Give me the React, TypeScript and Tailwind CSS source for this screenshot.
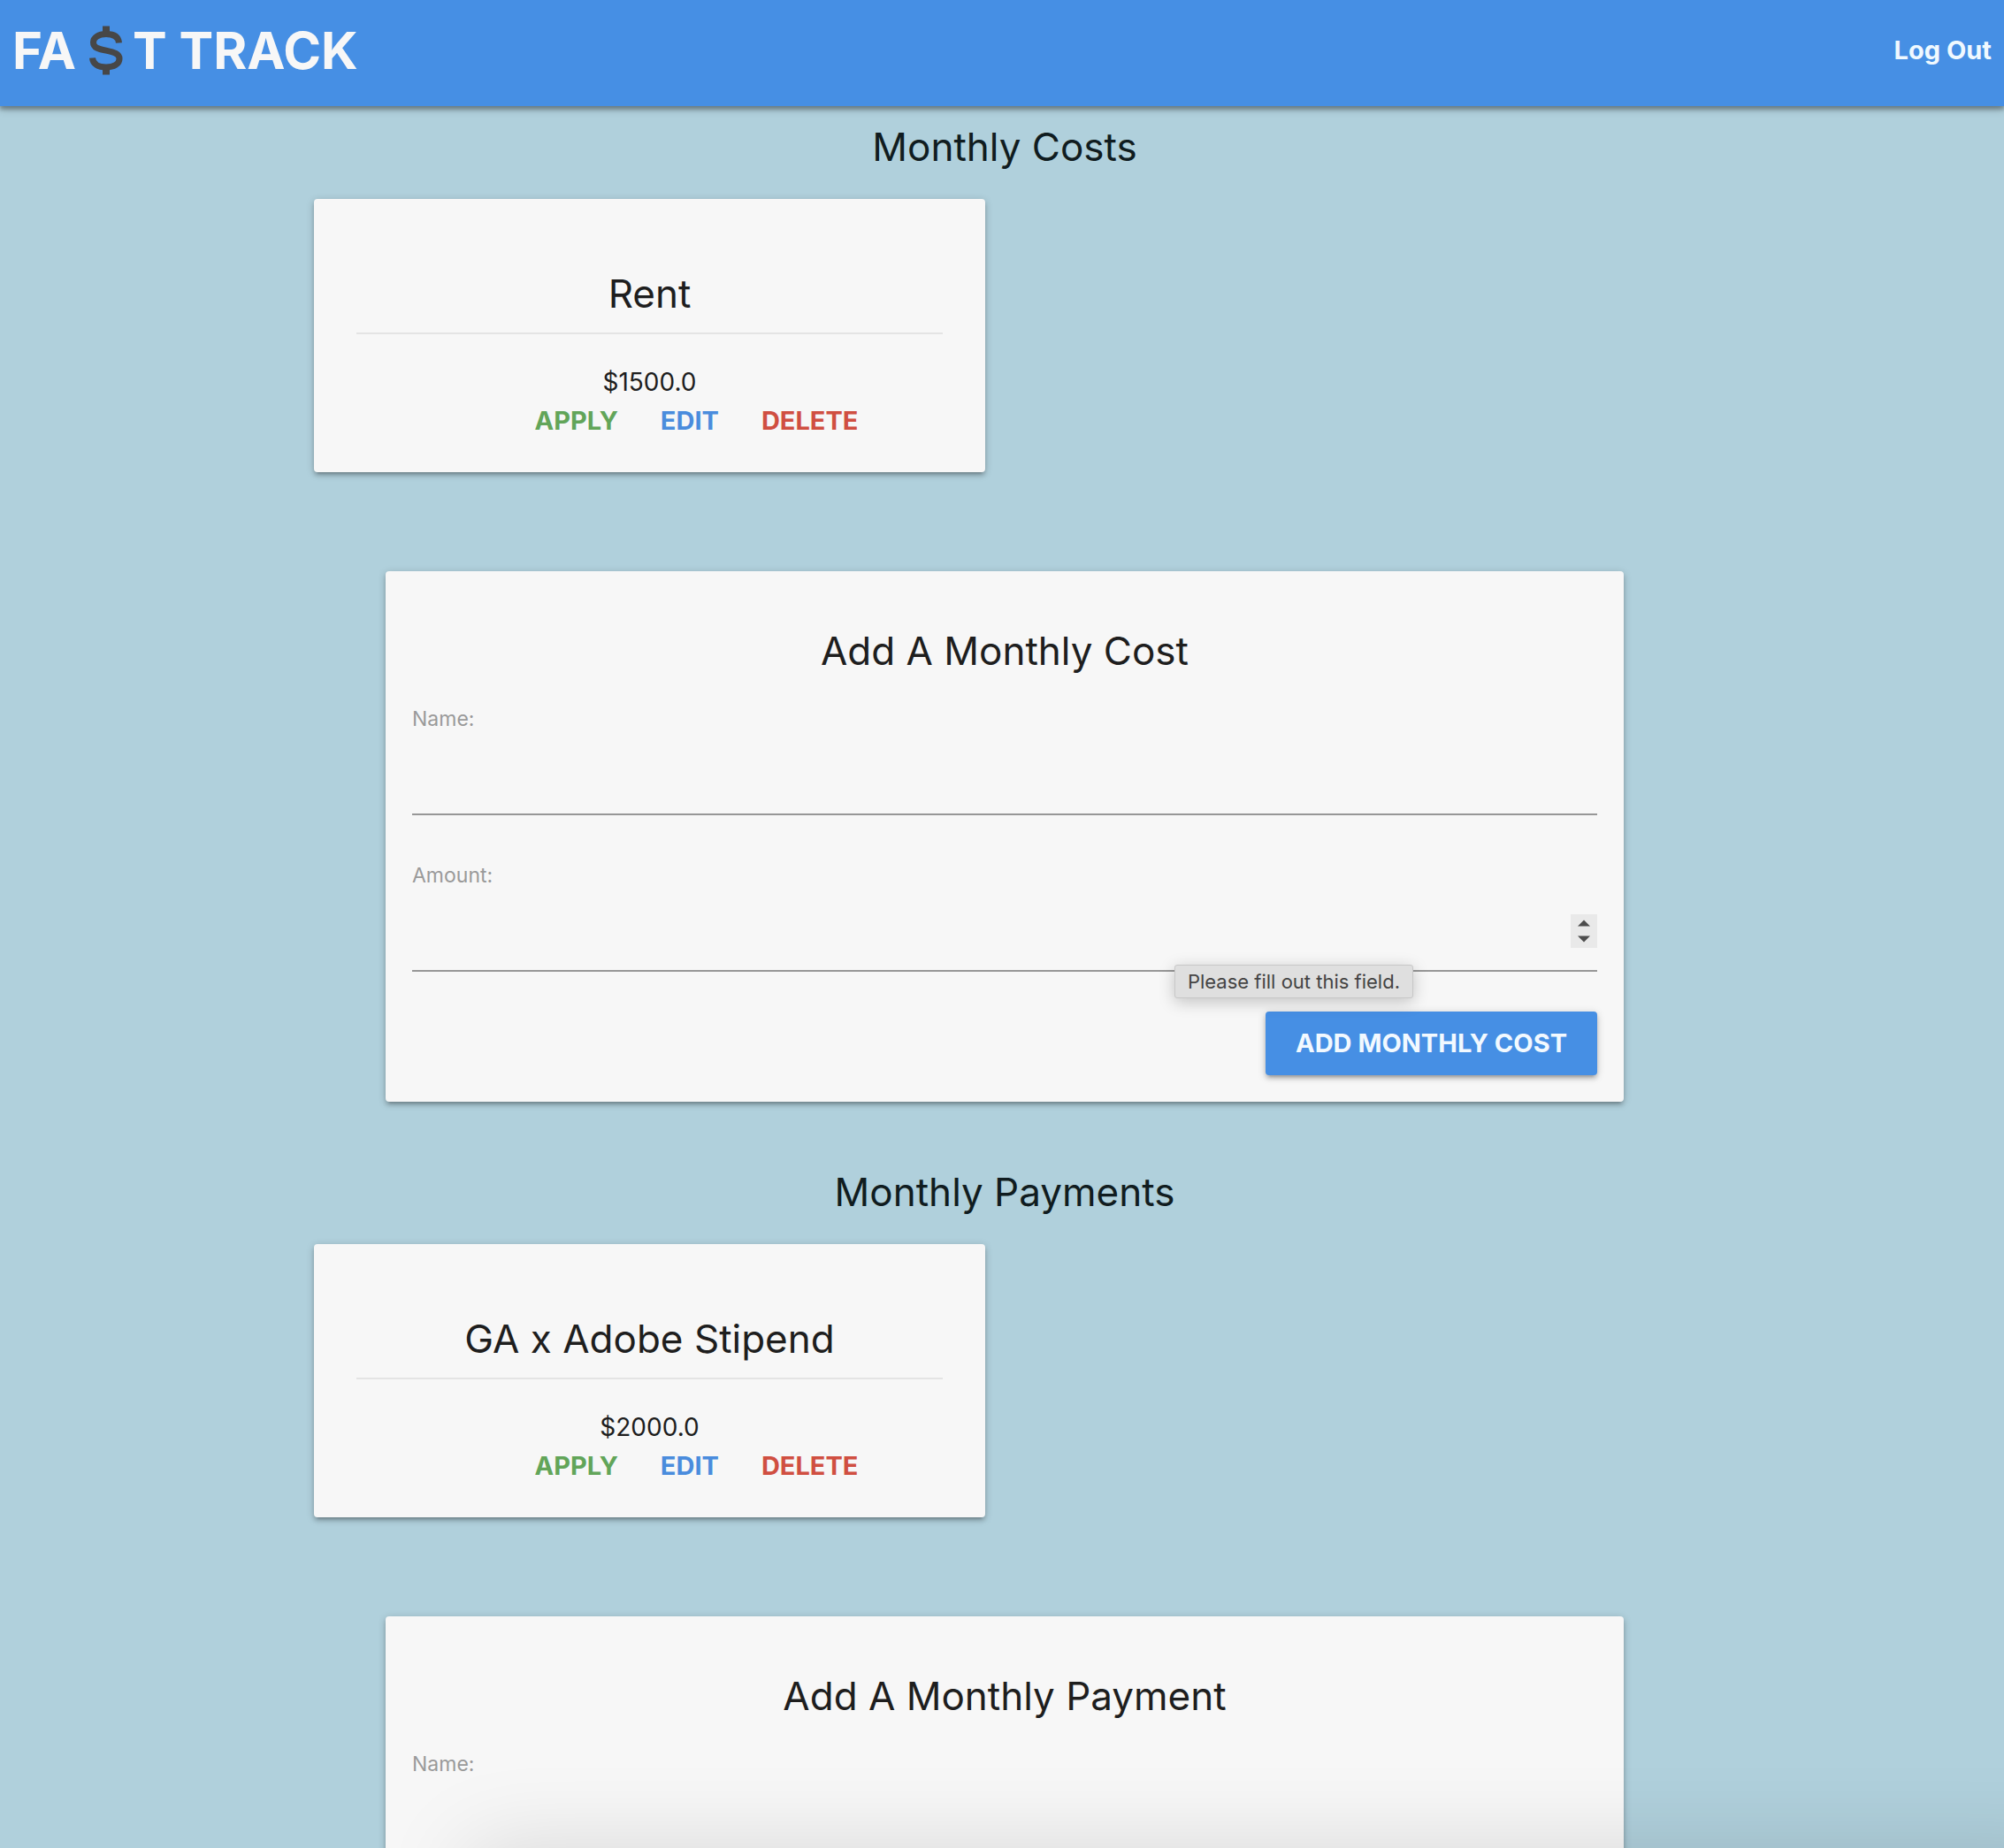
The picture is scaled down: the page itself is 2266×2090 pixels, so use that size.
import { ReactNode } from "react";

function SectionTitle({ children }: { children: ReactNode }) {
  return (
    <h2 className="text-center text-[44px] leading-[52px] font-normal text-[#101c20]">
      {children}
    </h2>
  );
}

function EntryCard({ name, amount }: { name: string; amount: string }) {
  return (
    <article className="rounded bg-[#f7f7f7] px-12 pt-[81px] pb-9 text-center shadow-[0_4px_4px_0_rgba(0,0,0,0.14),0_6px_2px_-4px_rgba(0,0,0,0.12),0_2px_10px_0_rgba(0,0,0,0.2)]">
      <h3 className="border-b-2 border-[#e4e4e4] pb-[18px] text-[44px] leading-[52px] font-normal">
        {name}
      </h3>
      <p className="mt-8 text-[28px] leading-[44px]">{amount}</p>
      <div className="flex justify-center gap-12 pl-[106px] text-[29px] leading-[44px] font-bold">
        <a href="#apply" className="text-[#62a559]">APPLY</a>
        <a href="#edit" className="text-[#4a8cdd]">EDIT</a>
        <a href="#delete" className="text-[#d04f41]">DELETE</a>
      </div>
    </article>
  );
}

function Spinner() {
  return (
    <span className="flex h-[38px] w-[30px] items-center justify-center bg-[#e9e9e9]" aria-hidden="true">
      <svg width="14" height="26" viewBox="0 0 14 26" fill="#4d4d4d">
        <path d="M0 7.500 7 0.500 14 7.500Z" />
        <path d="M0 18.500H14L7 25.500Z" />
      </svg>
    </span>
  );
}

function EntryForm({ kind, hint }: { kind: string; hint?: string }) {
  const id = kind.toLowerCase();
  return (
    <form className="mx-auto w-full max-w-[1400px] rounded bg-[#f7f7f7] px-[30px] pt-16 pb-[30px] shadow-[0_4px_4px_0_rgba(0,0,0,0.14),0_6px_2px_-4px_rgba(0,0,0,0.12),0_2px_10px_0_rgba(0,0,0,0.2)]">
      <h3 className="text-center text-[44px] leading-[52px] font-normal">Add A Monthly {kind}</h3>
      <div className="mt-[33px] flex flex-col">
        <label htmlFor={`${id}-name`} className="text-[23px] leading-[36px] text-[#9a9a9a]">Name:</label>
        <input
          id={`${id}-name`}
          type="text"
          className="h-[91px] border-b-2 border-[#979797] bg-transparent text-[28px] outline-none"
        />
      </div>
      <div className="relative mt-[50px] flex flex-col">
        <label htmlFor={`${id}-amount`} className="text-[23px] leading-[36px] text-[#9a9a9a]">Amount:</label>
        <div className="flex h-[91px] items-center border-b-2 border-[#979797]">
          <input
            id={`${id}-amount`}
            type="text"
            inputMode="decimal"
            className="h-full min-w-0 flex-1 bg-transparent text-[28px] outline-none"
          />
          <Spinner />
        </div>
        {hint && (
          <span
            role="tooltip"
            className="absolute top-[119px] right-[208px] rounded-[3px] border border-[#c8c8c8] bg-[#dfdfdf] px-3.5 text-[22px] leading-[36px] whitespace-nowrap text-[#444] shadow-[0_4px_18px_rgba(0,0,0,0.22)]"
          >
            {hint}
          </span>
        )}
      </div>
      <div className="mt-[45px] flex justify-end">
        <button
          type="button"
          className="h-[72px] rounded bg-[#468fe4] px-[34px] text-[29px] font-bold text-[#f2f9ff] uppercase shadow-[0_4px_4px_0_rgba(0,0,0,0.14),0_6px_2px_-4px_rgba(0,0,0,0.12),0_2px_10px_0_rgba(0,0,0,0.2)]"
        >
          Add Monthly {kind}
        </button>
      </div>
    </form>
  );
}

export default function App() {
  return (
    <div className="min-h-screen bg-[#b0d0dc] pb-20 font-[Inter,sans-serif] text-[#1e1e1e]">
      <nav className="flex h-[120px] items-start justify-between bg-[#468fe4] px-[14px] shadow-[0_4px_4px_0_rgba(0,0,0,0.24),0_2px_10px_0_rgba(0,0,0,0.3)]">
        <a href="#home" className="flex items-center text-[58px] leading-[114px] font-bold text-[#f7f7f7]">
          FA
          <svg className="mr-[10px] ml-3.5" width="40" height="56" viewBox="0 0 40 56" fill="none" stroke="#474747">
            <path d="M20 0.500V10M20 46V55.500" strokeWidth="8" />
            <path
              d="M34.500 19.500C34 12.500 28.500 9.500 20 9.500S5.500 13.500 5.500 19c0 6 5.500 7.300 14.500 9.200s15 3.600 15 9.300S29 47 20 47 5 43.500 4.500 36.500"
              strokeWidth="7"
            />
          </svg>
          T TRACK
        </a>
        <a href="#logout" className="text-[29px] leading-[114px] font-bold text-[#f0f9ff]">Log Out</a>
      </nav>
      <main className="pl-1.5">
        <section className="pt-5">
          <SectionTitle>Monthly Costs</SectionTitle>
          <div className="mx-auto mt-[33px] mb-28 grid w-full max-w-[1562px] grid-cols-2 gap-11">
            <EntryCard name="Rent" amount="$1500.0" />
          </div>
          <EntryForm kind="Cost" hint="Please fill out this field." />
        </section>
        <section className="pt-[76px]">
          <SectionTitle>Monthly Payments</SectionTitle>
          <div className="mx-auto mt-[33px] mb-28 grid w-full max-w-[1562px] grid-cols-2 gap-11">
            <EntryCard name="GA x Adobe Stipend" amount="$2000.0" />
          </div>
          <EntryForm kind="Payment" />
        </section>
      </main>
      {/* Soft shade rising from the bottom edge of the window */}
      <div className="pointer-events-none fixed top-full -right-20 left-[530px] h-40 shadow-[0_0_100px_0_rgba(0,0,0,0.13)]" />
    </div>
  );
}
